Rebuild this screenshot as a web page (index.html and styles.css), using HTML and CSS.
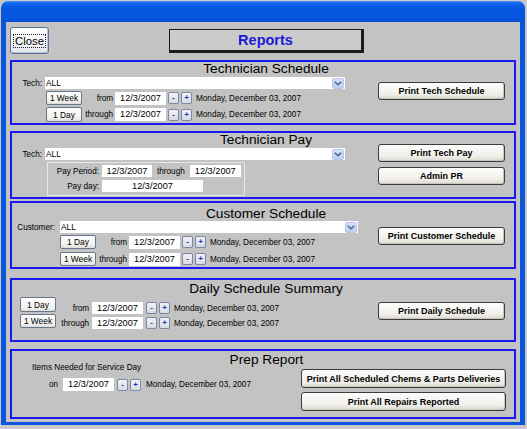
FILE: index.html
```html
<!DOCTYPE html>
<html>
<head>
<meta charset="utf-8">
<title>Reports</title>
<link rel="stylesheet" href="styles.css">
</head>
<body>
<div class="window">
  <div class="titlebar"></div>
  <div class="frame">
    <div class="client">
      <div class="header">
        <button class="close"><span class="focus">Close</span></button>
        <div class="title-box">Reports</div>
      </div>

      <section class="sec s1">
        <div class="sec-title">Technician Schedule</div>
        <div class="fields f1">
          <div class="combo-row">
            <span class="lbl l-tech">Tech:</span>
            <div class="combo c-tech"><span class="combo-val">ALL</span><span class="drop"><svg width="8" height="5" viewBox="0 0 8 5"><path d="M0.8 0.8 L4 3.8 L7.2 0.8" fill="none" stroke="#4d6185" stroke-width="1.5"/></svg></span></div>
          </div>
          <div class="date-row">
            <button class="sbtn">1 Week</button>
            <span class="lbl l-d1">from</span>
            <span class="tb date">12/3/2007</span>
            <button class="pm minus">-</button><button class="pm plus">+</button>
            <span class="long">Monday, December 03, 2007</span>
          </div>
          <div class="date-row">
            <button class="sbtn tall">1 Day</button>
            <span class="lbl l-d1">through</span>
            <span class="tb date">12/3/2007</span>
            <button class="pm minus">-</button><button class="pm plus">+</button>
            <span class="long">Monday, December 03, 2007</span>
          </div>
        </div>
        <div class="actions a1">
          <button class="pbtn">Print Tech Schedule</button>
        </div>
      </section>

      <section class="sec s2">
        <div class="sec-title">Technician Pay</div>
        <div class="fields f2">
          <div class="combo-row">
            <span class="lbl l-tech">Tech:</span>
            <div class="combo c-tech"><span class="combo-val">ALL</span><span class="drop"><svg width="8" height="5" viewBox="0 0 8 5"><path d="M0.8 0.8 L4 3.8 L7.2 0.8" fill="none" stroke="#4d6185" stroke-width="1.5"/></svg></span></div>
          </div>
          <div class="paybox">
            <div class="pay-row">
              <span class="lbl l-pay">Pay Period:</span>
              <span class="tb tb50">12/3/2007</span>
              <span class="lbl l-thru">through</span>
              <span class="tb tb51">12/3/2007</span>
            </div>
            <div class="pay-row pay-row2">
              <span class="lbl l-pay">Pay day:</span>
              <span class="tb tb101">12/3/2007</span>
            </div>
          </div>
        </div>
        <div class="actions a2">
          <button class="pbtn">Print Tech Pay</button>
          <button class="pbtn">Admin PR</button>
        </div>
      </section>

      <section class="sec s3">
        <div class="sec-title">Customer Schedule</div>
        <div class="fields f3">
          <div class="combo-row">
            <span class="lbl l-cust">Customer:</span>
            <div class="combo c-cust"><span class="combo-val">ALL</span><span class="drop"><svg width="8" height="5" viewBox="0 0 8 5"><path d="M0.8 0.8 L4 3.8 L7.2 0.8" fill="none" stroke="#4d6185" stroke-width="1.5"/></svg></span></div>
          </div>
          <div class="date-row">
            <button class="sbtn">1 Day</button>
            <span class="lbl l-d1">from</span>
            <span class="tb date">12/3/2007</span>
            <button class="pm minus">-</button><button class="pm plus">+</button>
            <span class="long">Monday, December 03, 2007</span>
          </div>
          <div class="date-row row-b">
            <button class="sbtn">1 Week</button>
            <span class="lbl l-d1">through</span>
            <span class="tb date">12/3/2007</span>
            <button class="pm minus">-</button><button class="pm plus">+</button>
            <span class="long">Monday, December 03, 2007</span>
          </div>
        </div>
        <div class="actions a3">
          <button class="pbtn">Print Customer Schedule</button>
        </div>
      </section>

      <section class="sec s4">
        <div class="sec-title">Daily Schedule Summary</div>
        <div class="fields f4">
          <div class="bcol">
            <button class="sbtn tall">1 Day</button>
            <button class="sbtn">1 Week</button>
          </div>
          <div class="dcol">
            <div class="date-row">
              <span class="lbl l-d4">from</span>
              <span class="tb date d12">12/3/2007</span>
              <button class="pm minus pm3">-</button><button class="pm plus">+</button>
              <span class="long">Monday, December 03, 2007</span>
            </div>
            <div class="date-row row-b">
              <span class="lbl l-d4">through</span>
              <span class="tb date d12">12/3/2007</span>
              <button class="pm minus pm3">-</button><button class="pm plus">+</button>
              <span class="long">Monday, December 03, 2007</span>
            </div>
          </div>
        </div>
        <div class="actions a4">
          <button class="pbtn">Print Daily Schedule</button>
        </div>
      </section>

      <section class="sec s5">
        <div class="sec-title">Prep Report</div>
        <div class="fields f5">
          <div class="items">Items Needed for Service Day</div>
          <div class="date-row on-row">
            <span class="lbl l-on">on</span>
            <span class="tb date">12/3/2007</span>
            <button class="pm minus pm3">-</button><button class="pm plus">+</button>
            <span class="long long5">Monday, December 03, 2007</span>
          </div>
        </div>
        <div class="actions a5">
          <button class="pbtn tall">Print All Scheduled Chems &amp; Parts Deliveries</button>
          <button class="pbtn tall">Print All Repairs Reported</button>
        </div>
      </section>
    </div>
  </div>
</div>
</body>
</html>
```

FILE: styles.css
```css
* { box-sizing: border-box; }
html, body { margin: 0; padding: 0; }
body {
  width: 527px;
  height: 429px;
  overflow: hidden;
  background: #c9c9c9;
  font-family: "Liberation Sans", Arial, sans-serif;
  font-size: 8.2px;
  color: #000;
}
button {
  font-family: "Liberation Sans", Arial, sans-serif;
  margin: 0;
  padding: 0;
  color: #000;
  flex: none;
}
.window { margin: 1px 2px 0 1px; }
.titlebar {
  height: 21px;
  border-radius: 7px 7px 0 0;
  background: linear-gradient(#4a94f8 0, #1267ee 2px, #0659e4 6px, #0454dd 12px, #0556e2 17px, #0a4ed2 21px);
}
.frame {
  border: 5px solid #0a54de;
  border-top: 0;
  border-bottom-width: 3px;
}
.client {
  background: #c3c3c3;
  padding: 5px 4px 3px 4px;
}
.header { display: flex; align-items: flex-start; height: 27px; }
.close {
  width: 39px;
  height: 27px;
  border: 1px solid #5d7096;
  border-radius: 3px;
  background: linear-gradient(#ffffff, #f1f2f6 70%, #dfe2ea);
  box-shadow: inset -1px -1px 0 #b9c2d6;
  display: flex;
  align-items: center;
  justify-content: center;
  font-size: 11.3px;
}
.focus {
  display: block;
  width: 33px;
  height: 14px;
  line-height: 12px;
  border: 1px dotted #222;
  text-align: center;
}
.title-box {
  margin-left: 120px;
  margin-top: 2px;
  width: 195px;
  height: 24px;
  border: 1px solid #1a1a1a;
  border-right-width: 3px;
  border-bottom-width: 3px;
  background: #cbcbcb;
  color: #1b1bd6;
  font-weight: bold;
  font-size: 14.5px;
  display: flex;
  align-items: center;
  justify-content: center;
}

/* sections */
.sec {
  display: grid;
  grid-template-columns: 1fr 127px;
  align-items: start;
  border: 2px solid #1a1aee;
  padding-right: 9px;
}
.sec > * { grid-row: 1; }
.sec-title {
  grid-column: 1 / 3;
  text-align: center;
  font-size: 13.7px;
  line-height: 13px;
  padding-left: 15px;
}
.fields { grid-column: 1; }
.actions { grid-column: 2; display: flex; flex-direction: column; }

.s1 { height: 65px; margin-top: 6px; }
.s2 { height: 68px; margin-top: 6px; }
.s3 { height: 68px; margin-top: 2px; }
.s4 { height: 64px; margin-top: 9px; }
.s5 { height: 70px; margin-top: 7px; grid-template-columns: 1fr 205px; padding-right: 8px; }

.s3 .sec-title { padding-top: 4px; }
.s4 .sec-title, .s5 .sec-title { padding-top: 2px; }

.f1 { margin-top: 15px; }
.f2 { margin-top: 15px; }
.f3 { margin-top: 18px; }
.f4 { margin-top: 17px; display: flex; }
.f5 { margin-top: 12px; }

.a1 { margin-top: 20px; }
.a2 { margin-top: 11px; gap: 5px; }
.a3 { margin-top: 24px; }
.a4 { margin-top: 22px; }
.a5 { margin-top: 18px; gap: 4px; }

/* rows */
.combo-row { display: flex; align-items: center; height: 12px; }
.lbl { text-align: right; flex: none; white-space: nowrap; }
.l-tech { width: 30px; margin-right: 3px; }
.l-cust { width: 43px; margin-right: 5px; }
.combo {
  display: flex;
  align-items: center;
  height: 12px;
  background: #fff;
}
.c-tech { width: 300px; }
.c-cust { width: 298px; }
.combo-val { flex: 1; padding-left: 1px; font-size: 8.3px; }
.drop {
  width: 12px;
  height: 11px;
  margin-right: 1px;
  border: 1px solid #b7c6ec;
  border-radius: 2px;
  background: linear-gradient(#d5e0fb, #bccdf7);
  display: flex;
  align-items: center;
  justify-content: center;
}

.date-row { display: flex; align-items: center; margin-top: 2px; }
.f1 .date-row { padding-left: 34px; }
.f3 .date-row { padding-left: 48px; }
.f3 .row-b { margin-top: 3px; }

.sbtn {
  width: 36px;
  height: 14px;
  border: 1px solid #66778f;
  border-radius: 2px;
  background: linear-gradient(#ffffff, #f1f1ee 75%, #dedcd6);
  font-size: 8.4px;
  line-height: 12px;
}
.sbtn.tall { height: 15px; }
.l-d1 { width: 31px; margin-right: 2px; }
.tb {
  display: block;
  background: #fff;
  text-align: center;
  font-size: 9.2px;
  flex: none;
}
.date { width: 51px; height: 13px; line-height: 13px; }
.pm {
  width: 11px;
  height: 12px;
  margin-left: 2px;
  border: 1px solid #7b88a6;
  border-radius: 2px;
  background: linear-gradient(#f2f2f6, #d8dae4);
  font-size: 8px;
  font-weight: bold;
  line-height: 10px;
}
.minus { color: #333; }
.plus { color: #1537c8; }
.long { margin-left: 4px; white-space: nowrap; }

/* pay box */
.paybox {
  margin-left: 35px;
  margin-top: 2px;
  width: 198px;
  height: 34px;
  border: 1px solid #e6e6e6;
  padding-top: 2px;
}
.pay-row { display: flex; align-items: center; height: 12px; }
.pay-row2 { margin-top: 3px; }
.l-pay { width: 51px; margin-right: 3px; }
.l-thru { margin: 0 5px; }
.tb50 { width: 50px; height: 12px; line-height: 12px; }
.tb51 { width: 51px; height: 12px; line-height: 12px; }
.tb101 { width: 101px; height: 12px; line-height: 12px; }

/* daily */
.bcol { margin-left: 8px; display: flex; flex-direction: column; gap: 2px; }
.dcol { margin-top: 5px; }
.dcol .date-row { margin-top: 0; }
.dcol .row-b { margin-top: 3px; }
.l-d4 { width: 33px; margin-right: 3px; }
.d12 { height: 12px; line-height: 12px; }
.pm3 { margin-left: 3px; }

/* prep */
.items { padding-left: 20px; line-height: 10px; }
.on-row { margin-top: 5px; }
.l-on { width: 46px; margin-right: 5px; }
.long5 { margin-left: 5px; }

.pbtn {
  width: 100%;
  height: 18px;
  border: 1px solid #3c3c3c;
  border-radius: 3px;
  background: linear-gradient(#fdfdfc, #f0efea 70%, #dcd8cf);
  box-shadow: inset -1px -1px 0 #c9c5bb;
  font-size: 9px;
  font-weight: bold;
}
.pbtn.tall { height: 19px; }
```
